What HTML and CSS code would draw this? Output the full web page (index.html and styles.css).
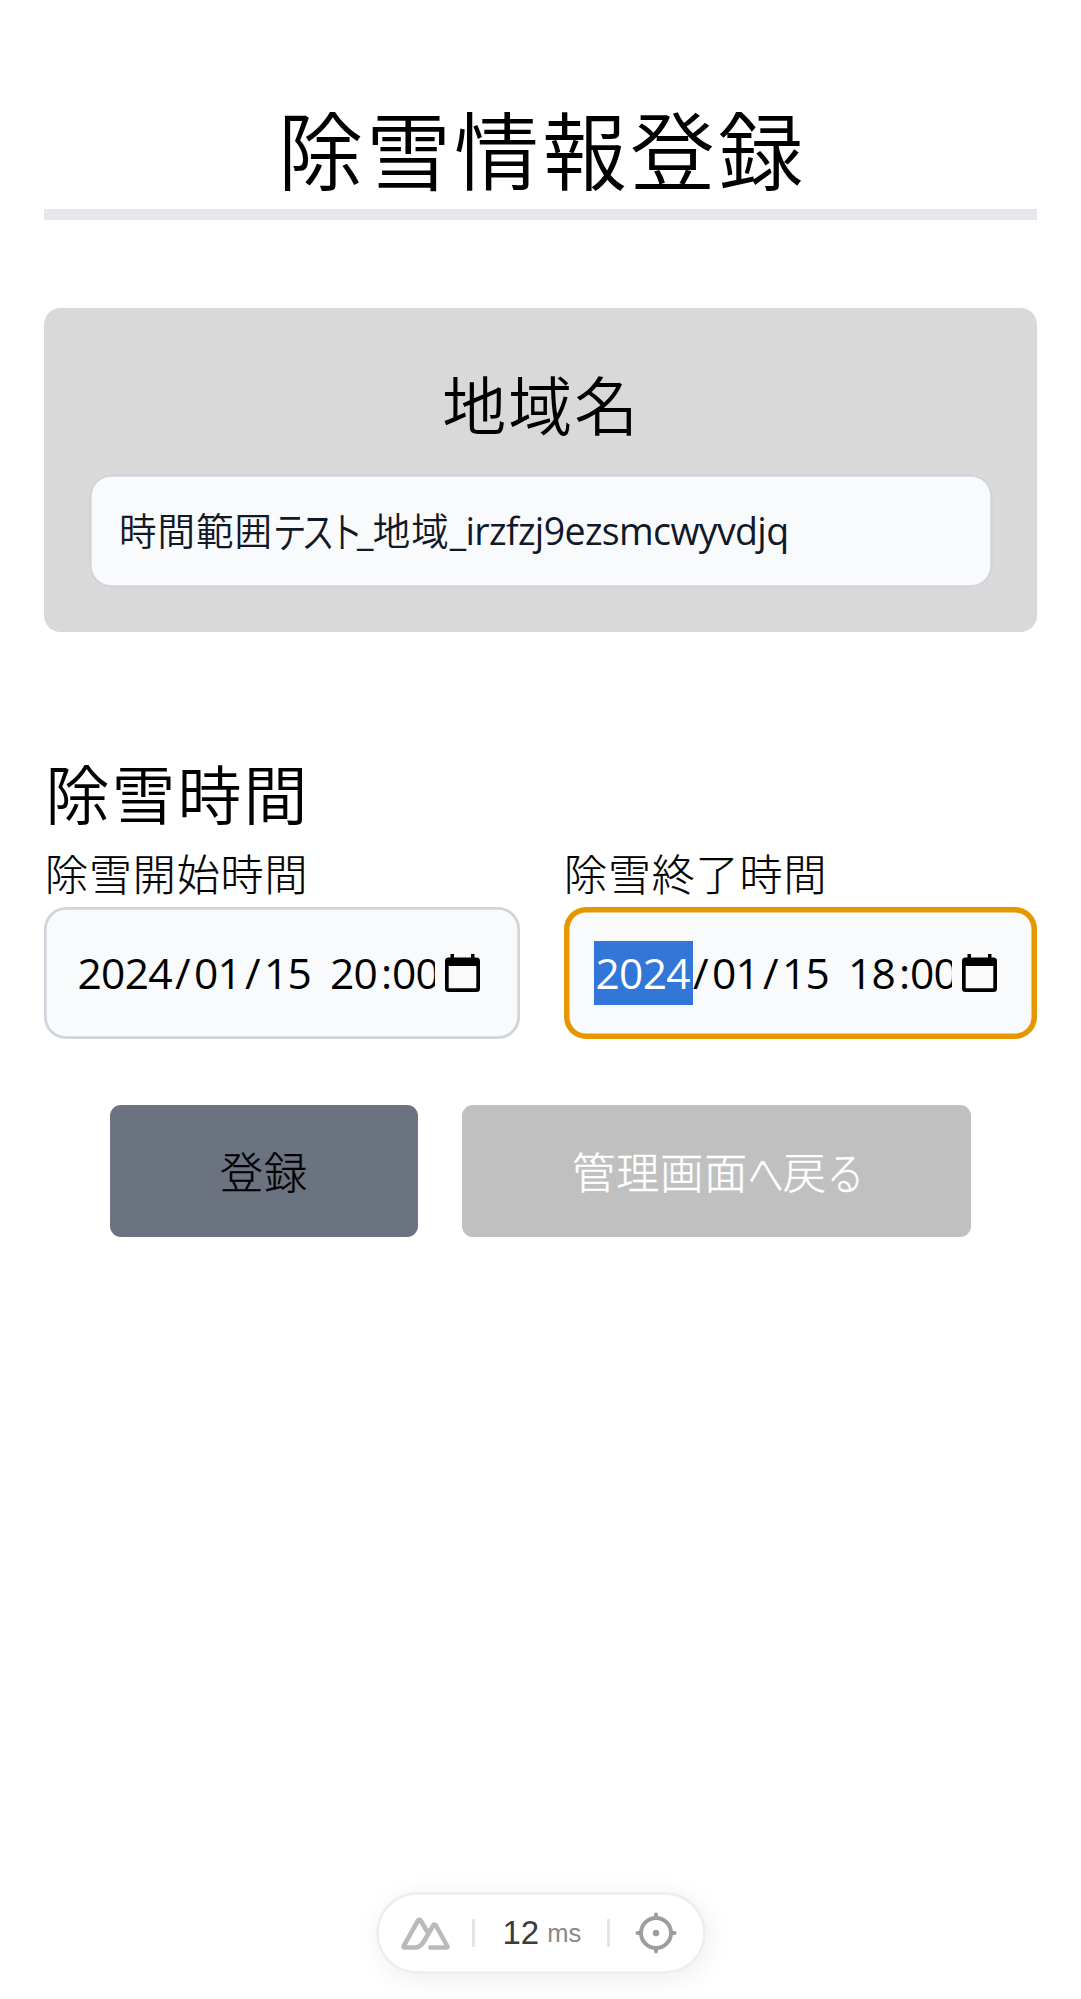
FILE: index.html
```html
<!DOCTYPE html>
<html lang="ja">
<head>
<meta charset="utf-8">
<title>除雪情報登録</title>
<link rel="stylesheet" href="styles.css">
</head>
<body>
<main class="page">
  <h1 class="title">除雪情報登録</h1>
  <section class="card">
    <h2 class="heading">地域名</h2>
    <div class="region-field"><span class="cjk">時間範囲</span><span class="kana-fit"><span class="kana-inner">テスト</span></span><span class="latin">_</span><span class="cjk">地域</span><span class="latin">_irzfzj9ezsmcwyvdjq</span></div>
  </section>
  <section class="times">
    <h2 class="heading">除雪時間</h2>
    <div class="time-grid">
      <div class="time-col">
        <div class="label">除雪開始時間</div>
        <div class="datetime">
          <div class="value"><span class="year">2024</span><span class="slash">/</span><span class="part">01</span><span class="slash">/</span><span class="part">15</span><span class="gap"></span><span class="part">20</span><span class="colon">:</span><span class="part">00</span></div>
          <svg class="calendar" viewBox="0 0 35 38"><path fill-rule="evenodd" d="M5.5 0H9V3.5H26V0H29.5V3.5H31.5Q35 3.5 35 7V34.500Q35 38 31.500 38H3.500Q0 38 0 34.500V7Q0 3.500 3.500 3.500H5.500ZM3.700 12V34.300H31.300V12Z"/></svg>
        </div>
      </div>
      <div class="time-col">
        <div class="label label-end">除雪終了時間</div>
        <div class="datetime focused">
          <div class="value"><span class="year selected">2024</span><span class="slash">/</span><span class="part">01</span><span class="slash">/</span><span class="part">15</span><span class="gap"></span><span class="part">18</span><span class="colon">:</span><span class="part">00</span></div>
          <svg class="calendar" viewBox="0 0 35 38"><path fill-rule="evenodd" d="M5.5 0H9V3.5H26V0H29.5V3.5H31.5Q35 3.5 35 7V34.500Q35 38 31.500 38H3.500Q0 38 0 34.500V7Q0 3.500 3.500 3.500H5.500ZM3.700 12V34.300H31.300V12Z"/></svg>
        </div>
      </div>
    </div>
  </section>
  <div class="actions">
    <button class="button submit">登録</button>
    <button class="button back">管理画面<span class="he"><span class="he-inner">へ</span></span>戻<span class="ru"><span class="ru-inner">る</span></span></button>
  </div>
</main>
<div class="devtools">
  <svg class="nuxt" viewBox="0 0 49 33" fill="none" stroke="#bababa" stroke-width="4.600" stroke-linecap="round" stroke-linejoin="round"><path d="M29.500 30.500H45.500Q47 30.500 46.200 29L35.200 9Q33.500 6.300 31.800 9L23.500 23.500Q19.500 30.500 14 30.500H3.700Q2 30.500 2.800 28.800L16.500 4.300Q18.300 1.500 20.200 4.300L27 16"/></svg>
  <span class="divider"></span>
  <span class="timing"><span class="count">12</span><span class="unit">ms</span></span>
  <span class="divider"></span>
  <svg class="target" viewBox="0 0 42 42" fill="none" stroke="#9d9d9d" stroke-width="4" stroke-linecap="round"><circle cx="21" cy="21" r="15"/><path d="M21 2.500V6M21 36V39.500M2.500 21H6M36 21H39.500"/><circle cx="21" cy="21" r="3.200" fill="#9d9d9d" stroke="none"/></svg>
</div>
</body>
</html>
```
FILE: styles.css
```css
* { box-sizing: border-box; }
body {
  margin: 0;
  height: 1999px;
  background: #fff;
  color: #000;
  font-family: "Noto Sans CJK JP", sans-serif;
  font-weight: 350;
  display: flex;
  flex-direction: column;
  align-items: center;
}
.page { width: 100%; padding: 102px 44px 0; }
.title {
  margin: 0;
  padding: 1px 0 18px 3px;
  border-bottom: 11px solid #e5e7eb;
  font-size: 85px;
  line-height: 88px;
  letter-spacing: 3px;
  font-weight: 350;
  text-align: center;
}
.card {
  margin-top: 88px;
  padding: 61px 44.5px 44.5px;
  background: #d9d9d9;
  border-radius: 16.5px;
}
.heading {
  margin: 0;
  padding-left: 1.5px;
  font-size: 64px;
  line-height: 66px;
  letter-spacing: 2px;
  font-weight: 350;
}
.card .heading { text-align: center; }
.region-field {
  display: flex;
  align-items: center;
  height: 114px;
  margin-top: 38.5px;
  padding-left: 30.5px;
  box-shadow: inset 0 0 0 2.75px #d1d5db;
  border-radius: 22px;
  background: #f9fafb;
  color: #111827;
  font-size: 37.5px;
  line-height: 50px;
  letter-spacing: 1px;
  white-space: nowrap;
}
.cjk, .kana-fit { padding-bottom: 4px; }
.kana-fit { width: 84px; font-size: 38.5px; }
.kana-inner { display: inline-block; letter-spacing: -6px; transform: scale(0.87, 1.1); transform-origin: left; }
.latin { font-family: "Open Sans", sans-serif; font-size: 37.5px; font-weight: 400; letter-spacing: -0.65px; }
.times { margin-top: 126px; }
.time-grid { display: grid; grid-template-columns: 476px 473px; gap: 44px; margin-top: 26px; }
.label { padding-left: 1px; font-size: 43px; line-height: 44px; letter-spacing: 0.9px; font-weight: 300; -webkit-text-stroke: 0.2px #000; }
.label-end { padding-left: 0; }
.datetime {
  display: flex;
  align-items: center;
  height: 132px;
  margin-top: 12.5px;
  padding-left: 32px;
  box-shadow: inset 0 0 0 2.75px #d1d5db;
  border-radius: 22px;
  background: #f9fafb;
}
.focused { box-shadow: inset 0 0 0 5.5px #e59700; padding-left: 30px; }
.value {
  display: flex;
  width: 359px;
  overflow: hidden;
  font-family: "Open Sans", sans-serif;
  font-size: 42.5px;
  font-weight: 400;
  line-height: 64px;
  letter-spacing: -0.7px;
  white-space: nowrap;
}
.year, .part, .slash, .colon, .gap { flex: none; }
.year { width: 99px; padding-left: 1.500px; }
.part { width: 53px; padding-left: 2px; }
.slash { width: 17px; }
.gap { width: 13px; }
.colon { width: 9px; }
.selected { background: #3277d8; color: #fff; }
.calendar { width: 35px; height: 38px; margin-left: 9.500px; flex: none; }
.focused .value { width: 358px; }
.actions { display: flex; gap: 44px; margin: 66px 0 0 66px; }
.button {
  display: flex;
  align-items: center;
  justify-content: center;
  height: 132px;
  border: 0;
  border-radius: 11px;
  padding: 0 0 2px;
  font: 300 43px/44px "Noto Sans CJK JP", sans-serif;
  letter-spacing: 1px;
}
.submit { width: 308px; background: #6b7280; color: #000; -webkit-text-stroke: 0.3px #000; }
.back { width: 509px; background: #c0c0c0; color: #fff; -webkit-text-stroke: 0.4px #fff; }
.he { width: 34.5px; }
.ru { width: 34px; text-align: left; }
.he-inner, .ru-inner { display: inline-block; transform-origin: left; }
.he-inner { transform: scale(0.82, 1.2); }
.ru-inner { transform: scale(0.86, 1.04); }
.devtools {
  display: flex;
  align-items: center;
  width: 330px;
  height: 82px;
  margin-top: auto;
  margin-bottom: 25px;
  padding-left: 25px;
  border-radius: 41px;
  background: #fff;
  box-shadow: inset 0 0 0 2.75px #eee, 3px 5px 27px rgba(0, 0, 0, 0.07);
  font-family: "Liberation Sans", sans-serif;
  font-weight: 400;
}
.nuxt { width: 49px; height: 33px; }
.divider { width: 3px; height: 28px; margin-left: 22px; background: #e5e5e5; }
.timing { display: flex; align-items: center; width: 110px; padding-left: 28px; white-space: nowrap; }
.count { font-size: 33px; color: #3c3c3c; }
.unit { font-size: 25.5px; color: #888; margin-left: 8px; }
.target { width: 42px; height: 42px; margin-left: 25px; }
```
